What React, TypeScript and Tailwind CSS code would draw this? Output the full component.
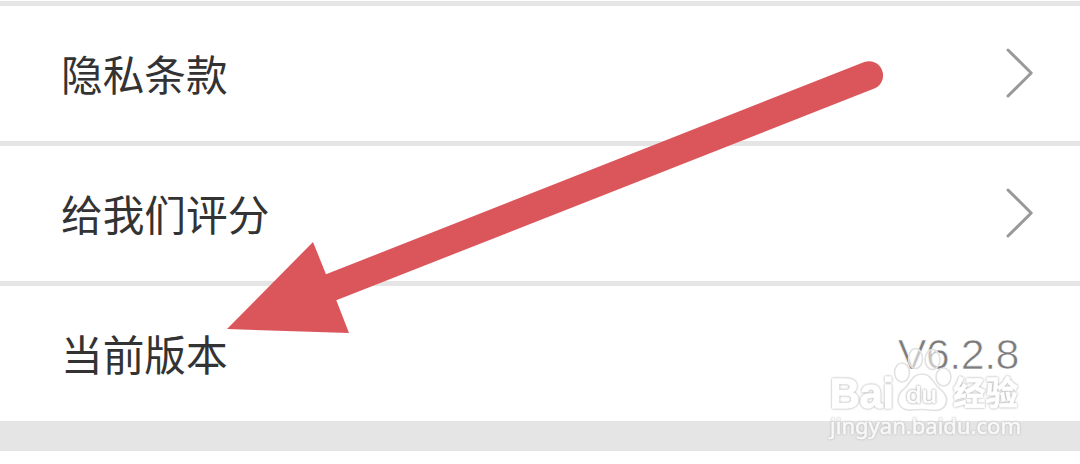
interface Row {
  label: string
  value?: string
}

const ROWS: Row[] = [
  { label: '隐私条款' },
  { label: '给我们评分' },
  { label: '当前版本', value: 'V6.2.8' },
]

export default function App() {
  return (
    <div className="relative h-[464px] w-[1080px] overflow-hidden bg-white pt-px">
      {ROWS.map((row) => (
        <SettingRow key={row.label} row={row} />
      ))}
      <div className="h-[30px] bg-[#e5e5e5]" />
      <Arrow />
      <Watermark />
    </div>
  )
}

function SettingRow({ row }: { row: Row }) {
  return (
    <div className="flex h-[140px] items-center justify-between border-t-[5px] border-[#e5e5e5] pr-[46px] pl-[61px]">
      <span className="pt-px font-['Noto_Sans_CJK_SC',sans-serif] text-[41.7px] leading-none text-[#333]">
        {row.label}
      </span>
      {row.value ? (
        <span className="mr-[15px] pt-px font-['Liberation_Sans',sans-serif] text-[43px] leading-none tracking-[-0.5px] text-[#7c7c7c] [-webkit-text-stroke:0.7px_white]">
          {row.value}
        </span>
      ) : (
        <Chevron />
      )}
    </div>
  )
}

function Chevron() {
  return (
    <svg width="28" height="50" viewBox="0 0 28 50" fill="none" className="mb-[2px]">
      <path d="M2 2L25.2 25L2 48" stroke="#999" strokeWidth="3" strokeLinecap="round" strokeLinejoin="round" />
    </svg>
  )
}

function Arrow() {
  return (
    <svg className="pointer-events-none absolute inset-0" width="1080" height="464" viewBox="0 0 1080 464">
      <path d="M227 329L313 242L326 274.3L864.3 62A14.2 14.2 0 0 1 874.9 88.3L336.3 300.3L349 333Z" fill="#db565b" />
    </svg>
  )
}

function Watermark() {
  return (
    <svg className="pointer-events-none absolute inset-0" width="1080" height="464" viewBox="0 0 1080 464">
      {/* Paw */}
      <g fill="white" fillOpacity="0.55" stroke="#e2e2e2" strokeWidth="1.6">
        <ellipse cx="902" cy="372.5" rx="7.5" ry="9.5" />
        <ellipse cx="915.5" cy="358.5" rx="7" ry="10" />
        <ellipse cx="932.5" cy="359.5" rx="7.5" ry="10" />
        <ellipse cx="943.5" cy="377" rx="7.5" ry="9" />
        <path d="M922 374C912 374 911 383 904 389C898 393 896 402 901 407C906 412 914 409.5 922 409.5C931 409.5 940 413 945 406C949 399 945 393 940 389C933 384 932 374 922 374Z" />
      </g>
      <g fill="white" stroke="white" strokeWidth="1.4" strokeLinejoin="round" className="[filter:drop-shadow(0_0_1px_#a0a0a0)]">
        <text x="830" y="407.5" textLength="64" lengthAdjust="spacingAndGlyphs" className="font-['Liberation_Sans',sans-serif] text-[42px] font-bold">
          Bai
        </text>
        <text x="953" y="405" textLength="65" lengthAdjust="spacingAndGlyphs" strokeWidth="0.8" className="font-['Noto_Sans_CJK_SC',sans-serif] text-[33px] font-bold">
          经验
        </text>
      </g>
      <text
        x="906"
        y="403"
        textLength="31"
        lengthAdjust="spacingAndGlyphs"
        fill="white"
        stroke="white"
        strokeWidth="0.6"
        className="font-['Liberation_Sans',sans-serif] text-[24px] [filter:drop-shadow(0_0_0.9px_#8c8c8c)]"
      >
        du
      </text>
      <text
        x="830"
        y="434"
        textLength="191"
        lengthAdjust="spacingAndGlyphs"
        fill="#f8f8f8"
        stroke="#f8f8f8"
        strokeWidth="0.6"
        className="font-['Noto_Sans',sans-serif] text-[22px] [filter:drop-shadow(0_0_1px_#b0b0b0)]"
      >
        jingyan.baidu.com
      </text>
    </svg>
  )
}
